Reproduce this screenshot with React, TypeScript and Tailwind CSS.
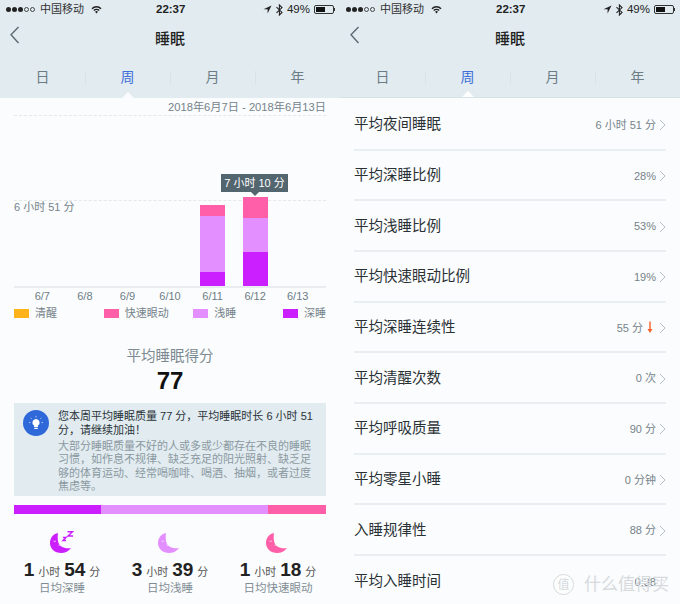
import React from "react";

const cjk = { fontFamily: '"Liberation Sans", "Noto Sans CJK SC", sans-serif' };

const StatusBar = () => (
  <div className="h-[19px] flex items-center justify-between pl-[6px] pr-[5px] text-[11px] text-[#222] relative">
    <div className="flex items-center gap-[1px]">
      {[1, 1, 1, 0, 0].map((on, i) => (
        <span
          key={i}
          className={on ? "w-[5px] h-[5px] rounded-full bg-[#222]" : "w-[5px] h-[5px] rounded-full border border-[#444]"}
        />
      ))}
      <span className="ml-[4px] text-[#333]">中国移动</span>
      <svg className="ml-[6px]" width="11" height="9" viewBox="0 0 12 9">
        <path d="M0.5 3a8 8 0 0 1 11 0L10.4 4.2a6.4 6.4 0 0 0-8.8 0z" fill="#222" />
        <path d="M2.5 5a5 5 0 0 1 7 0L8.4 6.2a3.4 3.4 0 0 0-4.8 0z" fill="#222" />
        <path d="M4.4 7a2.3 2.3 0 0 1 3.2 0L6 8.8z" fill="#222" />
      </svg>
    </div>
    <span className="absolute left-[156px] top-[2px] font-semibold text-[11.5px] leading-[15px]">22:37</span>
    <div className="flex items-center gap-[4px]">
      <svg width="9" height="9" viewBox="0 0 9 9">
        <path d="M8.5 0.5L0.5 4.2H4.6V8.5z" fill="#222" />
      </svg>
      <svg width="7" height="12" viewBox="0 0 7 12">
        <path d="M0.5 3.2L6 8.4L3.4 11V1L6 3.6L0.5 8.8" fill="none" stroke="#222" strokeWidth="1.1" />
      </svg>
      <span className="text-[11.5px]">49%</span>
      <div className="flex items-center">
        <div className="w-[20px] h-[9px] border border-[#333] rounded-[2px] p-[1px]">
          <div className="w-[9px] h-full bg-[#111]" />
        </div>
        <div className="w-[1px] h-[3px] bg-[#333]" />
      </div>
    </div>
  </div>
);

const Header = ({ solidCaret }: { solidCaret?: boolean }) => (
  <div className="bg-[#e1ebf0] shrink-0">
    <StatusBar />
    <div className="h-[38px] relative flex items-center justify-center">
      <svg className="absolute left-[9px] top-[7px]" width="11" height="18" viewBox="0 0 11 18">
        <path d="M9.5 1L2 8.8L9.5 17" fill="none" stroke="#5c6a72" strokeWidth="1.4" />
      </svg>
      <span className="text-[15px] font-medium text-[#222] pt-[3px]">睡眠</span>
    </div>
    <div className={"h-[41px] grid grid-cols-4 relative " + (solidCaret ? "border-b border-[#d7e1e6]" : "")}>
      {["日", "周", "月", "年"].map((t, i) => (
        <div
          key={t}
          className={
            "flex items-center justify-center text-[14px] relative " +
            (i === 1 ? "text-[#3f6fd8]" : "text-[#6d7d86]")
          }
        >
          {t}
          {i > 0 && <span className="absolute left-0 top-[14px] w-px h-[13px] bg-[#d8e2e7]" />}
          {i === 1 && (
            <span
              className={
                "absolute left-1/2 -translate-x-1/2 bottom-0 w-0 h-0 border-x-[6px] border-x-transparent border-b-[6px] " +
                (solidCaret ? "border-b-white" : "border-b-[#fbfcfd]")
              }
            />
          )}
        </div>
      ))}
    </div>
  </div>
);

const Moon = ({ color, zzz }: { color: string; zzz?: boolean }) => (
  <svg width="24" height="22" viewBox="0 0 24 22">
    <path
      d="M8 2 C3 3 0 7 0 12 C0 18 5 22 11 22 C15 22 19 20 21 17 C15 18 9 16 8 10 C7.6 7 7.6 4 8 2z"
      fill={color}
    />
    <path d="M3.5 10q1.2 1 2.4 0M8.5 14q1 .8 2 0" stroke="#fff" strokeWidth=".7" fill="none" />
    {zzz && <path d="M17.5 .8h5l-4.5 4.2h5M13 6.5h3l-3 3h3" stroke={color} strokeWidth="1.4" fill="none" />}
  </svg>
);

const legend = [
  { label: "清醒", color: "bg-[#ffb31a]", w: "w-[90px]" },
  { label: "快速眼动", color: "bg-[#ff5fa8]", w: "w-[90px]" },
  { label: "浅睡", color: "bg-[#e38fff]", w: "w-[90px]" },
  { label: "深睡", color: "bg-[#cc1fff]", w: "" },
];

const Days = ["6/7", "6/8", "6/9", "6/10", "6/11", "6/12", "6/13"];

const Column = ({ rem, light, deep }: { rem: number; light: number; deep: number }) => (
  <div className="w-[25px] flex flex-col">
    <div className="bg-[#ff5fa8]" style={{ height: rem }} />
    <div className="bg-[#e38fff]" style={{ height: light }} />
    <div className="bg-[#cc1fff]" style={{ height: deep }} />
  </div>
);

const Chart = () => (
  <div className="mx-[14px]">
    <div className="h-[172px] border-b-2 border-[#e9edf0] relative flex items-end">
      <div className="absolute left-0 right-0 top-[84px] border-t border-dashed border-[#e4e8eb]" />
      <span className="absolute left-0 top-[83px] text-[11px] text-[#75838b] leading-[16px]">6 小时 51 分</span>
      <div className="ml-[186px] flex items-end gap-[18px] relative z-10">
        <Column rem={11} light={56} deep={14} />
        <Column rem={21} light={34} deep={34} />
      </div>
      <div className="absolute z-20 left-[207px] top-[58px] h-[18px] w-[67px] bg-[#53656f] text-white text-[11px] flex items-center justify-center whitespace-nowrap">
        7 小时 10 分
        <span className="absolute -bottom-[4px] left-1/2 -translate-x-1/2 w-0 h-0 border-x-[4px] border-x-transparent border-t-[4px] border-t-[#53656f]" />
      </div>
    </div>
    <div className="grid grid-cols-7 text-[11px] text-[#6d7d86] h-[15px] items-center text-center mx-[7px]">
      {Days.map((d) => (
        <span key={d}>{d}</span>
      ))}
    </div>
    <div className="flex items-center h-[20px] text-[11px] text-[#75838b]">
      {legend.map((b) => (
        <div key={b.label} className={"flex items-center gap-[6px] whitespace-nowrap " + b.w}>
          <span className={"w-[15px] h-[9px] " + b.color} />
          <span>{b.label}</span>
        </div>
      ))}
    </div>
  </div>
);

const Stat = ({
  color,
  zzz,
  h,
  m,
  label,
}: {
  color: string;
  zzz?: boolean;
  h: string;
  m: string;
  label: string;
}) => (
  <div className="flex flex-col items-center">
    <Moon color={color} zzz={zzz} />
    <div className="flex items-baseline gap-[4px] text-[#222] mt-[7px] leading-[20px]">
      <span className="text-[19px] font-bold">{h}</span>
      <span className="text-[11px] text-[#555]">小时</span>
      <span className="text-[19px] font-bold">{m}</span>
      <span className="text-[11px] text-[#555]">分</span>
    </div>
    <span className="text-[11.5px] text-[#7f8d95] leading-[16px] mt-[-2px]">{label}</span>
  </div>
);

const LeftPanel = () => (
  <div className="w-[340px] h-[604px] flex flex-col overflow-hidden bg-[#fbfcfd]">
    <Header />
    <div className="mx-[14px] h-[18px] shrink-0 flex items-center justify-end border-b border-dashed border-[#e4e8eb] text-[11.2px] text-[#75838b] whitespace-nowrap pt-[1px]">
      2018年6月7日 - 2018年6月13日
    </div>
    <Chart />
    <div className="flex flex-col items-center mt-[23px]">
      <span className="text-[14.5px] text-[#7b8a92] leading-[20px]">平均睡眠得分</span>
      <span className="text-[24px] font-bold text-[#111] leading-[28px] mt-[1px]">77</span>
    </div>
    <div className="mx-[14px] mt-[8px] h-[93px] shrink-0 bg-[#e1ebf0] flex pl-[9px] pr-[10px] pt-[7px] gap-[9px]">
      <div className="w-[26px] h-[26px] rounded-full bg-[#2f68d8] shrink-0 flex items-center justify-center">
        <svg width="16" height="16" viewBox="0 0 16 16">
          <path d="M8 4a3.6 3.6 0 0 0-2 6.6V12h4v-1.4A3.6 3.6 0 0 0 8 4z" fill="#fff" />
          <rect x="6.3" y="12.7" width="3.4" height="1.3" fill="#fff" />
          <path d="M8 .8v1.6M2.6 2.8l1 1M13.4 2.8l-1 1M1 7.5h1.4M13.6 7.5H15" stroke="#fff" strokeWidth=".8" opacity=".8" />
        </svg>
      </div>
      <div className="min-w-0">
        <p className="text-[11px] leading-[13.5px] text-[#2a3338]">
          您本周平均睡眠质量 77 分，平均睡眠时长 6 小时 51 分，请继续加油！
        </p>
        <p className="text-[11px] leading-[13.3px] text-[#8b99a1] mt-[3px]">
          大部分睡眠质量不好的人或多或少都存在不良的睡眠习惯，如作息不规律、缺乏充足的阳光照射、缺乏足够的体育运动、经常喝咖啡、喝酒、抽烟，或者过度焦虑等。
        </p>
      </div>
    </div>
    <div className="mx-[14px] mt-[9px] h-[9px] flex shrink-0">
      <div className="w-[87px] bg-[#cc1fff]" />
      <div className="w-[167px] bg-[#e38fff]" />
      <div className="flex-1 bg-[#ff5fa8]" />
    </div>
    <div className="mt-[17px] grid grid-cols-3 mx-[8px]">
      <Stat color="#cc1fff" zzz h="1" m="54" label="日均深睡" />
      <Stat color="#e38fff" h="3" m="39" label="日均浅睡" />
      <Stat color="#ff5fa8" h="1" m="18" label="日均快速眼动" />
    </div>
  </div>
);

const rows: { label: string; value: string; arrow?: boolean }[] = [
  { label: "平均夜间睡眠", value: "6 小时 51 分" },
  { label: "平均深睡比例", value: "28%" },
  { label: "平均浅睡比例", value: "53%" },
  { label: "平均快速眼动比例", value: "19%" },
  { label: "平均深睡连续性", value: "55 分", arrow: true },
  { label: "平均清醒次数", value: "0 次" },
  { label: "平均呼吸质量", value: "90 分" },
  { label: "平均零星小睡", value: "0 分钟" },
  { label: "入睡规律性", value: "88 分" },
];

const Row = ({ label, value, arrow, last }: { label: string; value: string; arrow?: boolean; last?: boolean }) => (
  <div
    className={
      "h-[50.67px] shrink-0 mx-[14px] pt-[2px] flex items-center justify-between " +
      (last ? "" : "border-b-2 border-[#e9eef0]")
    }
  >
    <span className="text-[14.5px] text-[#2a3135]">{label}</span>
    <div className="flex items-center text-[11px] text-[#75838b]">
      <span>{value}</span>
      {arrow && (
        <svg className="ml-[4px]" width="6" height="13" viewBox="0 0 6 13">
          <path d="M3 0.5V8" stroke="#f4622a" strokeWidth="1.4" />
          <path d="M0.5 8H5.5L3 12z" fill="#f4622a" />
        </svg>
      )}
      <svg className={arrow ? "ml-[6px]" : "ml-[3px]"} width="7" height="12" viewBox="0 0 7 12">
        <path d="M1 1L6 6L1 11" fill="none" stroke={last ? "#dfe3e6" : "#b4bfc5"} strokeWidth="1" />
      </svg>
    </div>
  </div>
);

const RightPanel = () => (
  <div className="w-[340px] h-[604px] flex flex-col overflow-hidden bg-[#fbfcfd] relative">
    <Header solidCaret />
    <div className="h-[2px] shrink-0" />
    {rows.map((r) => (
      <Row key={r.label} {...r} />
    ))}
    <Row label="平均入睡时间" value="0:38" last />
    {/* watermark */}
    <div className="absolute left-[213px] top-[572px] flex items-center gap-[10px] text-[#d6dadd]">
      <span className="w-[21px] h-[21px] rounded-full border border-[#d6dadd] flex items-center justify-center text-[12px] bg-white/60">
        值
      </span>
      <span className="text-[17px] whitespace-nowrap">什么值得买</span>
    </div>
  </div>
);

export default function App() {
  return (
    <div className="w-[680px] h-[604px] flex overflow-hidden bg-white" style={cjk}>
      <LeftPanel />
      <RightPanel />
    </div>
  );
}
